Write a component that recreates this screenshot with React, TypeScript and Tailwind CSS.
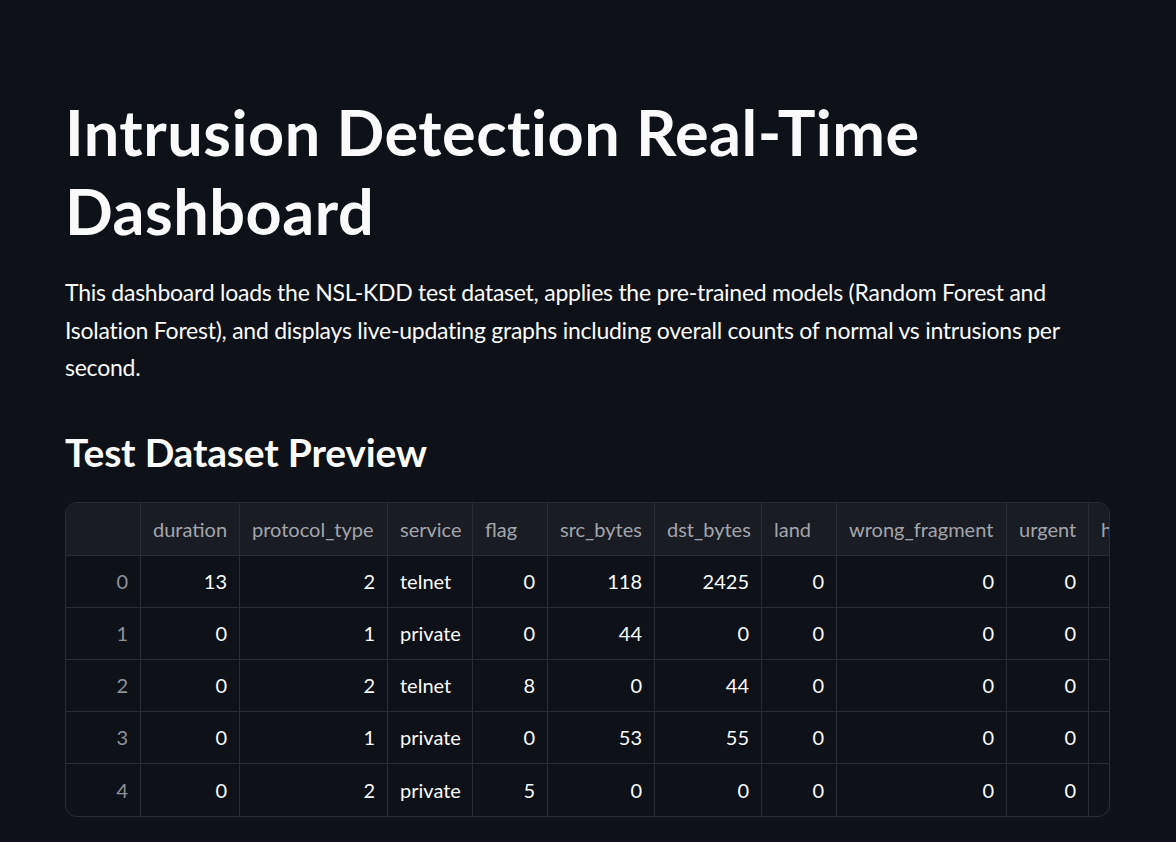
import React from "react";

const cols = [
  { name: "", w: 75, align: "right" },
  { name: "duration", w: 99, align: "right" },
  { name: "protocol_type", w: 148, align: "right" },
  { name: "service", w: 85, align: "left" },
  { name: "flag", w: 75, align: "right" },
  { name: "src_bytes", w: 107, align: "right" },
  { name: "dst_bytes", w: 107, align: "right" },
  { name: "land", w: 75, align: "right" },
  { name: "wrong_fragment", w: 170, align: "right" },
  { name: "urgent", w: 82, align: "right" },
  { name: "hot", w: 80, align: "right" },
];

const rows = [
  ["0", "13", "2", "telnet", "0", "118", "2425", "0", "0", "0", ""],
  ["1", "0", "1", "private", "0", "44", "0", "0", "0", "0", ""],
  ["2", "0", "2", "telnet", "8", "0", "44", "0", "0", "0", ""],
  ["3", "0", "1", "private", "0", "53", "55", "0", "0", "0", ""],
  ["4", "0", "2", "private", "5", "0", "0", "0", "0", "0", ""],
];

export default function App() {
  return (
    <div
      className="min-h-[842px] w-full bg-[#0e1117] text-[#fafafa] pl-[65px] pr-[66px] pt-[92px]"
      style={{ fontFamily: "Lato, 'Noto Sans', sans-serif" }}
    >
      <h1 className="text-[63px] leading-[79px] font-bold tracking-[0.5px]">
        Intrusion Detection Real-Time Dashboard
      </h1>
      <p className="mt-[24px] text-[23px] leading-[37.5px] tracking-[-0.25px]">
        This dashboard loads the NSL-KDD test dataset, applies the pre-trained models (Random Forest and Isolation Forest), and displays live-updating graphs including overall counts of normal vs intrusions per second.
      </p>
      <h3 className="mt-[40px] text-[39px] leading-[50px] font-bold tracking-[-0.2px]">
        Test Dataset Preview
      </h3>
      <div className="mt-[25px] w-[1045px] overflow-hidden rounded-[12px] border border-[#2a2d34] text-[20px]">
        <div className="flex h-[53px] bg-[#1a1c23] border-b border-[#2a2d34] text-[#a3a5ab]">
          {cols.map((c, i) => (
            <div
              key={i}
              className="shrink-0 flex items-center px-[12px] border-r border-[#2a2d34] whitespace-nowrap overflow-hidden"
              style={{ width: c.w }}
            >
              {c.name}
            </div>
          ))}
        </div>
        {rows.map((r, ri) => (
          <div
            key={ri}
            className={`flex h-[52px] ${ri < rows.length - 1 ? "border-b" : ""} border-[#2a2d34]`}
          >
            {r.map((v, ci) => (
              <div
                key={ci}
                className={`shrink-0 flex items-center px-[12px] border-r border-[#2a2d34] whitespace-nowrap ${
                  cols[ci].align === "right" ? "justify-end" : "justify-start"
                } ${ci === 0 ? "text-[#8f9197]" : "text-[#fafafa]"}`}
                style={{ width: cols[ci].w }}
              >
                {v}
              </div>
            ))}
          </div>
        ))}
      </div>
    </div>
  );
}
